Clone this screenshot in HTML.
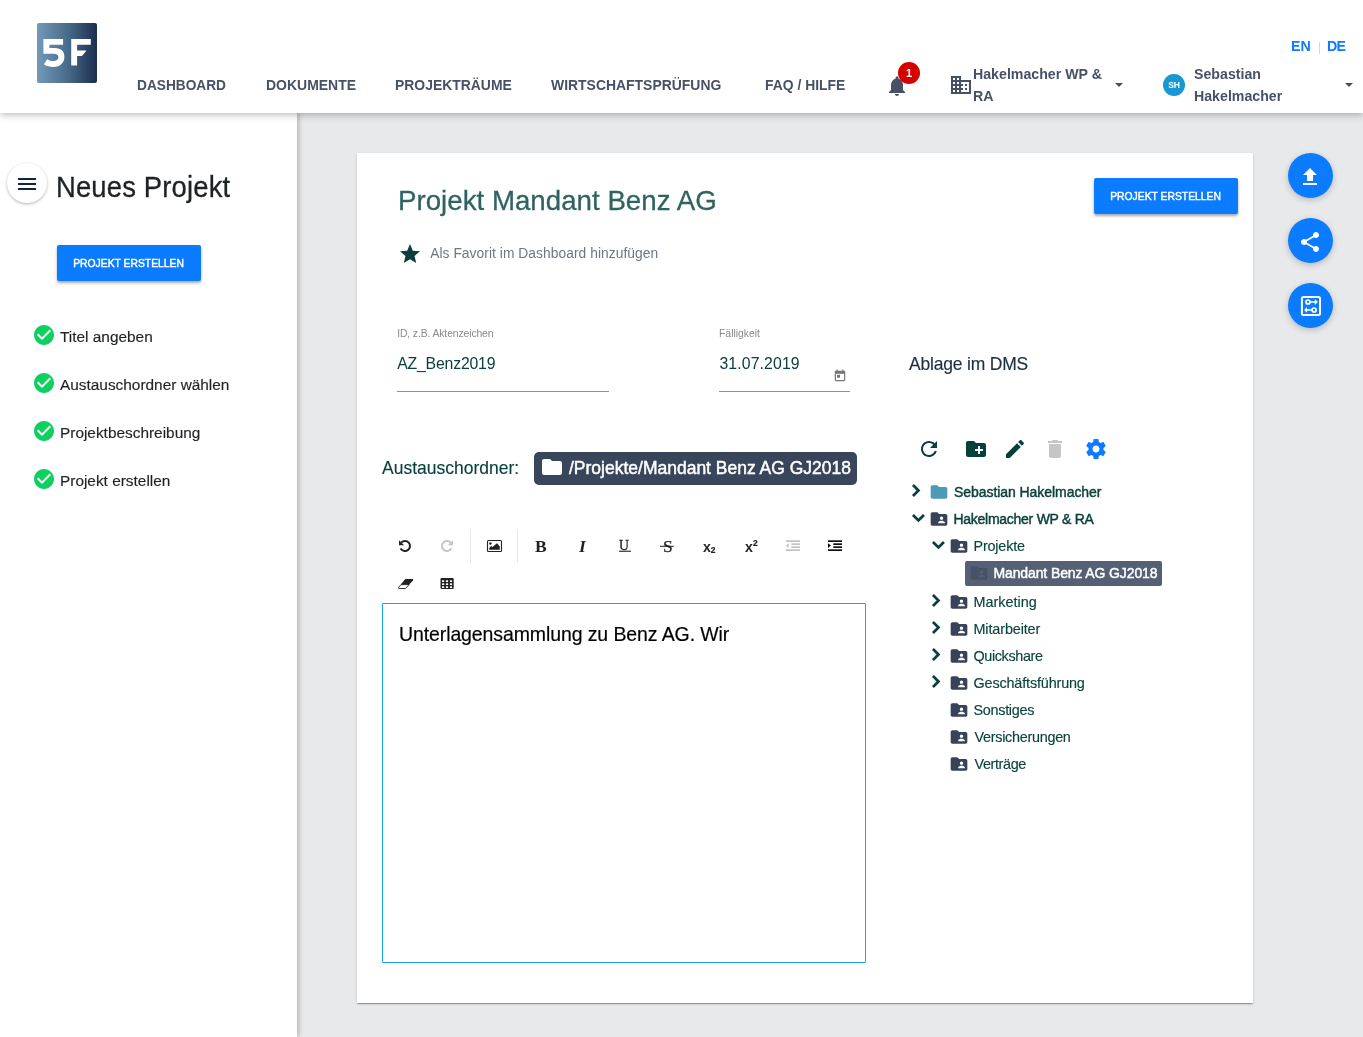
<!DOCTYPE html>
<html lang="de">
<head>
<meta charset="utf-8">
<title>Neues Projekt</title>
<style>
*{box-sizing:border-box;margin:0;padding:0}
html,body{width:1363px;height:1037px;overflow:hidden}
body{font-family:"Liberation Sans",sans-serif;background:#e8e9eb;position:relative;color:#1f2933}
.abs{position:absolute;white-space:nowrap}
svg{position:absolute;display:block;overflow:visible}
/* header */
#hdr{position:absolute;left:0;top:0;width:1363px;height:113px;background:#fff;box-shadow:0 2px 7px rgba(0,0,0,.27);z-index:5}
#logo{position:absolute;left:37px;top:23px;width:60px;height:60px;border-radius:2px;background:linear-gradient(90deg,#739ab8 0%,#4a6c8c 50%,#1b2d4e 100%)}
.nav{position:absolute;top:77px;transform-origin:0 50%;font-weight:bold;font-size:15.4px;line-height:16px;color:#475166;white-space:nowrap}
.org{position:absolute;font-weight:bold;font-size:15.4px;line-height:22.2px;transform-origin:0 50%;transform:scaleX(.921);color:#475166;white-space:nowrap}
.lang{position:absolute;top:38.2px;font-weight:bold;font-size:14.2px;line-height:16px;color:#0d7bff;white-space:nowrap}
/* sidebar */
#side{position:absolute;left:0;top:112px;width:297px;height:925px;background:#fff;box-shadow:2px 0 5px rgba(0,0,0,.22);z-index:3}
.btn{position:absolute;background:#0b7bff;color:#fff;font-size:11.7px;-webkit-text-stroke:.45px #fff;text-align:center;border-radius:2px;box-shadow:0 2px 3px rgba(0,0,0,.35);white-space:nowrap;width:144px;height:36px;line-height:36px}
.step{position:absolute;left:60px;font-size:15.4px;line-height:18px;color:#1e2226;white-space:nowrap;-webkit-text-stroke:.15px #1e2226}
/* card */
#card{position:absolute;left:357px;top:153px;width:896px;height:850px;background:#fff;box-shadow:0 2px 1px -1px rgba(0,0,0,.2),0 1px 1px 0 rgba(0,0,0,.14),0 1px 3px 0 rgba(0,0,0,.12);z-index:1}
.fab{position:absolute;left:1288px;width:45px;height:45px;border-radius:50%;background:#0b7bff;box-shadow:0 2px 6px rgba(0,0,0,.22);z-index:2}
.tree{position:absolute;font-size:14.4px;line-height:18px;color:#0b433f;white-space:nowrap;-webkit-text-stroke:.15px #0b433f}
.tree.b{font-size:14px;color:#0a3f3b;-webkit-text-stroke:.45px #0a3f3b}
.lbl{position:absolute;font-size:10.4px;line-height:12px;color:#8a8a8a;white-space:nowrap}
.val{position:absolute;font-size:15.4px;line-height:18px;color:#0a403e;white-space:nowrap}
.ul{position:absolute;height:1px;background:#8f8f8f}
.btn span{display:inline-block;transform:scaleX(.885);transform-origin:50% 50%}
#hdr,#side,#card{will-change:transform}
</style>
</head>
<body>
<!-- HEADER -->
<div id="hdr">
  <div id="logo">
    <svg width="60" height="60" viewBox="0 0 60 60" style="left:0;top:0"><g fill="#fff">
      <path d="M6.400 16.100H26.100V21.700H12.400V25.100H17.600C24.600 25.100 27.400 28.900 27.400 33.900 27.400 39.300 23.400 43.900 16.400 43.900 12.800 43.900 9.300 42.900 6.900 41.200L10.200 36.200C12 37.400 14.200 38.100 16.300 38.100 19.500 38.100 21.400 36.500 21.400 34.200 21.400 31.900 19.900 30.700 16 30.700H6.400z"/>
      <path d="M34.200 16.100H53.800V21.700H40.100V27.500H49.500L45 33H40.100V42.600H34.200z"/>
    </g></svg>
  </div>
  <div class="nav" id="nDA" style="left:137.0px;transform:scaleX(0.889)">DASHBOARD</div>
  <div class="nav" id="nDO" style="left:265.7px;transform:scaleX(0.9082)">DOKUMENTE</div>
  <div class="nav" id="nPR" style="left:395.2px;transform:scaleX(0.9043)">PROJEKTRÄUME</div>
  <div class="nav" id="nWI" style="left:551.2px;transform:scaleX(0.9053)">WIRTSCHAFTSPRÜFUNG</div>
  <div class="nav" id="nFA" style="left:765.2px;transform:scaleX(0.9024)">FAQ / HILFE</div>
  <!-- bell -->
  <svg width="24" height="24" viewBox="0 0 24 24" style="left:885px;top:73.5px"><path fill="#475166" d="M12 22c1.100 0 2-.9 2-2h-4c0 1.100.89 2 2 2zm6-6v-5c0-3.070-1.640-5.640-4.500-6.320V4c0-.83-.67-1.500-1.500-1.500s-1.500.67-1.500 1.500v.68C7.630 5.360 6 7.920 6 11v5l-2 2v1h16v-1l-2-2z"/></svg>
  <div class="abs" style="left:898px;top:62px;width:22px;height:22px;border-radius:50%;background:#d50000;color:#fff;font-weight:bold;font-size:11px;line-height:22px;text-align:center">1</div>
  <!-- building -->
  <svg width="24" height="24" viewBox="0 0 24 24" style="left:949px;top:73px"><path fill="#475166" d="M12 7V3H2v18h20V7H12zM6 19H4v-2h2v2zm0-4H4v-2h2v2zm0-4H4V9h2v2zm0-4H4V5h2v2zm4 12H8v-2h2v2zm0-4H8v-2h2v2zm0-4H8V9h2v2zm0-4H8V5h2v2zm10 12h-8v-2h2v-2h-2v-2h2v-2h-2V9h8v10zm-2-8h-2v2h2v-2zm0 4h-2v2h2v-2z"/></svg>
  <div class="org" id="o1" style="left:973.1px;top:62.5px">Hakelmacher WP &amp;<br>RA</div>
  <svg width="8" height="4" viewBox="0 0 8 4" style="left:1114.8px;top:83px"><path fill="#475166" d="M0 0h8L4 4z"/></svg>
  <div class="abs" style="left:1163px;top:74px;width:22px;height:22px;border-radius:50%;background:#1797d4;color:#fff;font-weight:bold;font-size:8.6px;line-height:22px;text-align:center;letter-spacing:-.2px">SH</div>
  <div class="org" id="o2" style="left:1194px;top:62.5px">Sebastian<br>Hakelmacher</div>
  <svg width="8" height="4" viewBox="0 0 8 4" style="left:1344.5px;top:83px"><path fill="#475166" d="M0 0h8L4 4z"/></svg>
  <div class="lang" id="lEN" style="left:1291px">EN</div>
  <div class="abs" style="left:1319px;top:41.5px;width:1px;height:12px;background:#d3d6db"></div>
  <div class="lang" id="lDE" style="left:1327px;letter-spacing:-.8px">DE</div>
</div>

<!-- SIDEBAR -->
<div id="side">
  <div class="abs" style="left:7px;top:51px;width:40px;height:40px;border-radius:50%;background:#fff;box-shadow:0 1px 3px rgba(0,0,0,.3)"></div>
  <svg width="24" height="24" viewBox="0 0 24 24" style="left:15px;top:60px"><path fill="#122640" d="M3 18h18v-2H3v2zm0-5h18v-2H3v2zm0-7v2h18V6H3z"/></svg>
  <div class="abs" id="np" style="-webkit-text-stroke:.3px #1f2326;left:56.4px;top:57px;letter-spacing:.17px;transform-origin:0 50%;transform:scaleX(0.949);font-size:28.9px;line-height:36px;color:#1f2326">Neues Projekt</div>
  <div class="btn" id="b1" style="left:57px;top:133px"><span id="b1t">PROJEKT ERSTELLEN</span></div>
  <svg width="24" height="24" viewBox="0 0 24 24" style="left:32px;top:211px"><circle cx="12" cy="12" r="9" fill="#fff"/><path fill="#10cf62" d="M12 2C6.480 2 2 6.480 2 12s4.480 10 10 10 10-4.480 10-10S17.520 2 12 2zm-2 15l-5-5 1.410-1.410L10 14.170l7.590-7.590L19 8l-9 9z"/></svg>
  <svg width="24" height="24" viewBox="0 0 24 24" style="left:32px;top:259px"><circle cx="12" cy="12" r="9" fill="#fff"/><path fill="#10cf62" d="M12 2C6.480 2 2 6.480 2 12s4.480 10 10 10 10-4.480 10-10S17.520 2 12 2zm-2 15l-5-5 1.410-1.410L10 14.170l7.590-7.590L19 8l-9 9z"/></svg>
  <svg width="24" height="24" viewBox="0 0 24 24" style="left:32px;top:307px"><circle cx="12" cy="12" r="9" fill="#fff"/><path fill="#10cf62" d="M12 2C6.480 2 2 6.480 2 12s4.480 10 10 10 10-4.480 10-10S17.520 2 12 2zm-2 15l-5-5 1.410-1.410L10 14.170l7.590-7.590L19 8l-9 9z"/></svg>
  <svg width="24" height="24" viewBox="0 0 24 24" style="left:32px;top:355px"><circle cx="12" cy="12" r="9" fill="#fff"/><path fill="#10cf62" d="M12 2C6.480 2 2 6.480 2 12s4.480 10 10 10 10-4.480 10-10S17.520 2 12 2zm-2 15l-5-5 1.410-1.410L10 14.170l7.590-7.590L19 8l-9 9z"/></svg>
  <div class="step" id="s0" style="top:216.2px">Titel angeben</div>
  <div class="step" id="s1" style="top:264.2px">Austauschordner wählen</div>
  <div class="step" id="s2" style="top:312.2px">Projektbeschreibung</div>
  <div class="step" id="s3" style="top:360.2px">Projekt erstellen</div>
</div>

<!-- CARD -->
<div id="card">
  <div class="abs" id="ttl" style="-webkit-text-stroke:.3px #2f6360;left:41px;top:29.4px;transform-origin:0 50%;transform:scaleX(0.9788);font-size:28.3px;line-height:36px;color:#2f6360">Projekt Mandant Benz AG</div>
  <div class="btn" id="b2" style="left:737px;top:25px"><span id="b2t">PROJEKT ERSTELLEN</span></div>
  <svg width="24" height="24" viewBox="0 0 24 24" style="left:41.3px;top:88.9px"><path fill="#0c3e3d" d="M12 17.270L18.180 21l-1.640-7.030L22 9.240l-7.190-.61L12 2 9.190 8.630 2 9.240l5.460 4.730L5.820 21z"/></svg>
  <div class="abs" id="fav" style="left:73.2px;top:93px;letter-spacing:.05px;font-size:13.800px;line-height:16px;color:#6d7687">Als Favorit im Dashboard hinzufügen</div>

  <div class="lbl" id="l1" style="left:40.2px;letter-spacing:-.12px;top:174.5px">ID, z.B. Aktenzeichen</div>
  <div class="val" id="v1" style="left:40.2px;letter-spacing:-.18px;top:202.2px;font-size:15.8px">AZ_Benz2019</div>
  <div class="ul" style="left:40px;top:238px;width:212px"></div>
  <div class="lbl" id="l2" style="left:362px;top:174.5px">Fälligkeit</div>
  <div class="val" id="v2" style="left:362.4px;letter-spacing:.13px;top:202.2px;font-size:15.8px">31.07.2019</div>
  <div class="ul" style="left:362px;top:238px;width:131px"></div>
  <svg width="14" height="14" viewBox="0 0 24 24" style="left:476px;top:215.800px"><path fill="#757575" d="M19 3h-1V1h-2v2H8V1H6v2H5c-1.110 0-1.990.9-1.990 2L3 19c0 1.100.89 2 2 2h14c1.100 0 2-.9 2-2V5c0-1.100-.9-2-2-2zm0 16H5V8h14v11zM7 10h5v5H7z"/></svg>
  <div class="abs" id="abl" style="-webkit-text-stroke:.15px #1b2f45;left:552px;top:200px;letter-spacing:-.2px;transform-origin:0 50%;transform:scaleX(0.9409);font-size:18.6px;line-height:22px;color:#1b2f45">Ablage im DMS</div>

  <div class="abs" id="aus" style="-webkit-text-stroke:.15px #08423f;left:25px;top:304px;transform-origin:0 50%;transform:scaleX(0.9409);font-size:18.6px;line-height:22px;color:#08423f">Austauschordner:</div>
  <div class="abs" style="left:177px;top:299px;width:323px;height:33px;border-radius:5px;background:#38455a"></div>
  <svg width="24" height="24" viewBox="0 0 24 24" style="left:182.5px;top:302.2px"><path fill="#fff" d="M10 4H4c-1.100 0-1.990.9-1.990 2L2 18c0 1.100.9 2 2 2h16c1.100 0 2-.9 2-2V8c0-1.100-.9-2-2-2h-8l-2-2z"/></svg>
  <div class="abs" id="chip" style="left:211.500px;top:304px;transform-origin:0 50%;transform:scaleX(0.9409);font-size:18.6px;line-height:22px;color:#fff;-webkit-text-stroke:.5px #fff">/Projekte/Mandant Benz AG GJ2018</div>

  <!-- tree toolbar -->
  <svg width="24" height="24" viewBox="0 0 24 24" style="left:560px;top:284px"><path fill="#06403d" d="M17.650 6.350C16.200 4.900 14.210 4 12 4c-4.420 0-7.990 3.580-7.990 8s3.570 8 7.990 8c3.730 0 6.840-2.550 7.730-6h-2.080c-.82 2.330-3.040 4-5.650 4-3.310 0-6-2.690-6-6s2.690-6 6-6c1.660 0 3.140.69 4.220 1.780L13 11h7V4l-2.350 2.350z"/></svg>
  <svg width="24" height="24" viewBox="0 0 24 24" style="left:606.5px;top:284px"><path fill="#06403d" d="M20 6h-8l-2-2H4c-1.110 0-1.990.89-1.990 2L2 18c0 1.110.89 2 2 2h16c1.110 0 2-.89 2-2V8c0-1.110-.89-2-2-2zm-1 8h-3v3h-2v-3h-3v-2h3V9h2v3h3v2z"/></svg>
  <svg width="24" height="24" viewBox="0 0 24 24" style="left:646px;top:284px"><path fill="#06403d" d="M3 17.250V21h3.750L17.810 9.940l-3.750-3.750L3 17.250zM20.710 7.040c.39-.39.39-1.020 0-1.410l-2.340-2.340c-.39-.39-1.020-.39-1.410 0l-1.830 1.830 3.750 3.750 1.830-1.830z"/></svg>
  <svg width="24" height="24" viewBox="0 0 24 24" style="left:686px;top:284px"><path fill="#c6c6c6" d="M6 19c0 1.100.9 2 2 2h8c1.100 0 2-.9 2-2V7H6v12zM19 4h-3.500l-1-1h-5l-1 1H5v2h14V4z"/></svg>
  <svg width="24" height="24" viewBox="0 0 24 24" style="left:726.5px;top:284px"><path fill="#0d7bff" d="M19.430 12.980c.04-.32.07-.64.07-.98s-.03-.66-.07-.98l2.110-1.650c.19-.15.24-.42.12-.64l-2-3.460c-.12-.22-.39-.3-.61-.22l-2.490 1c-.52-.4-1.080-.73-1.690-.98l-.38-2.650C14.460 2.180 14.250 2 14 2h-4c-.25 0-.46.18-.49.42l-.38 2.650c-.61.25-1.170.59-1.690.98l-2.490-1c-.23-.09-.49 0-.61.22l-2 3.460c-.13.22-.07.49.12.64l2.110 1.650c-.04.32-.07.65-.07.98s.03.66.07.98l-2.110 1.650c-.19.15-.24.42-.12.64l2 3.460c.12.22.39.3.61.22l2.490-1c.52.4 1.080.73 1.690.98l.38 2.650c.03.24.24.42.49.42h4c.25 0 .46-.18.49-.42l.38-2.650c.61-.25 1.170-.59 1.690-.98l2.490 1c.23.09.49 0 .61-.22l2-3.460c.12-.22.07-.49-.12-.64l-2.110-1.650zM12 15.500c-1.930 0-3.500-1.570-3.500-3.500s1.570-3.500 3.500-3.500 3.500 1.570 3.500 3.500-1.570 3.500-3.500 3.500z"/></svg>
  <!-- tree -->
  <svg width="8.4" height="13" viewBox="0 0 8.4 13" style="left:555px;top:330.9px"><path fill="none" stroke="#063f3c" stroke-width="2.7" d="M.95 .95L6.5 6.5.95 12.05"/></svg>
  <svg width="20" height="20" viewBox="0 0 24 24" style="left:572.1px;top:329.4px"><path fill="#4b9bb6" d="M10 4H4c-1.100 0-1.990.9-1.990 2L2 18c0 1.100.9 2 2 2h16c1.100 0 2-.9 2-2V8c0-1.100-.9-2-2-2h-8l-2-2z"/></svg>
  <div class="tree b" id="t1" style="left:597px;top:330px;letter-spacing:-.06px">Sebastian Hakelmacher</div>
  <svg width="12.9" height="8.4" viewBox="0 0 12.9 8.4" style="left:555px;top:360.7px"><path fill="none" stroke="#063f3c" stroke-width="2.7" d="M.95 .95L6.45 6.45 11.95 .95"/></svg>
  <svg width="20" height="20" viewBox="0 0 24 24" style="left:572.1px;top:356.2px"><path fill="#384259" d="M20 6h-8l-2-2H4c-1.100 0-1.990.9-1.990 2L2 18c0 1.100.9 2 2 2h16c1.100 0 2-.9 2-2V8c0-1.100-.9-2-2-2zm-5 3c1.100 0 2 .9 2 2s-.9 2-2 2-2-.9-2-2 .9-2 2-2zm4 8h-8v-1c0-1.330 2.670-2 4-2s4 .670 4 2v1z"/></svg>
  <div class="tree b" id="t2" style="left:596.5px;top:357px;letter-spacing:-.27px">Hakelmacher WP &amp; RA</div>
  <svg width="12.9" height="8.4" viewBox="0 0 12.9 8.4" style="left:575.2px;top:388.2px"><path fill="none" stroke="#063f3c" stroke-width="2.7" d="M.95 .95L6.45 6.45 11.95 .95"/></svg>
  <svg width="20" height="20" viewBox="0 0 24 24" style="left:592.1px;top:383.1px"><path fill="#384259" d="M20 6h-8l-2-2H4c-1.100 0-1.990.9-1.990 2L2 18c0 1.100.9 2 2 2h16c1.100 0 2-.9 2-2V8c0-1.100-.9-2-2-2zm-5 3c1.100 0 2 .9 2 2s-.9 2-2 2-2-.9-2-2 .9-2 2-2zm4 8h-8v-1c0-1.330 2.670-2 4-2s4 .670 4 2v1z"/></svg>
  <div class="tree" id="t3" style="left:616.5px;top:384px;letter-spacing:-.19px">Projekte</div>
  <div class="abs" style="left:608px;top:408.3px;width:197px;height:24.5px;border-radius:2px;background:#556074"></div>
  <svg width="20" height="20" viewBox="0 0 24 24" style="left:612.2px;top:410px"><path fill="#475168" d="M20 6h-8l-2-2H4c-1.100 0-1.990.9-1.990 2L2 18c0 1.100.9 2 2 2h16c1.100 0 2-.9 2-2V8c0-1.100-.9-2-2-2zm-5 3c1.100 0 2 .9 2 2s-.9 2-2 2-2-.9-2-2 .9-2 2-2zm4 8h-8v-1c0-1.330 2.670-2 4-2s4 .670 4 2v1z"/></svg>
  <div class="tree b" id="t4" style="left:636.5px;top:411px;letter-spacing:-.12px;color:#fff;-webkit-text-stroke:.45px #fff">Mandant Benz AG GJ2018</div>
  <svg width="8.4" height="13" viewBox="0 0 8.4 13" style="left:575px;top:441.0px"><path fill="none" stroke="#063f3c" stroke-width="2.7" d="M.95 .95L6.5 6.5.95 12.05"/></svg>
  <svg width="20" height="20" viewBox="0 0 24 24" style="left:592.1px;top:439.1px"><path fill="#384259" d="M20 6h-8l-2-2H4c-1.100 0-1.990.9-1.990 2L2 18c0 1.100.9 2 2 2h16c1.100 0 2-.9 2-2V8c0-1.100-.9-2-2-2zm-5 3c1.100 0 2 .9 2 2s-.9 2-2 2-2-.9-2-2 .9-2 2-2zm4 8h-8v-1c0-1.330 2.670-2 4-2s4 .670 4 2v1z"/></svg>
  <div class="tree" id="r0" style="left:616.5px;top:440px">Marketing</div>
  <svg width="8.4" height="13" viewBox="0 0 8.4 13" style="left:575px;top:468.0px"><path fill="none" stroke="#063f3c" stroke-width="2.7" d="M.95 .95L6.5 6.5.95 12.05"/></svg>
  <svg width="20" height="20" viewBox="0 0 24 24" style="left:592.1px;top:466.1px"><path fill="#384259" d="M20 6h-8l-2-2H4c-1.100 0-1.990.9-1.990 2L2 18c0 1.100.9 2 2 2h16c1.100 0 2-.9 2-2V8c0-1.100-.9-2-2-2zm-5 3c1.100 0 2 .9 2 2s-.9 2-2 2-2-.9-2-2 .9-2 2-2zm4 8h-8v-1c0-1.330 2.670-2 4-2s4 .670 4 2v1z"/></svg>
  <div class="tree" id="r1" style="left:616.5px;top:467px;letter-spacing:-0.12px">Mitarbeiter</div>
  <svg width="8.4" height="13" viewBox="0 0 8.4 13" style="left:575px;top:495.0px"><path fill="none" stroke="#063f3c" stroke-width="2.7" d="M.95 .95L6.5 6.5.95 12.05"/></svg>
  <svg width="20" height="20" viewBox="0 0 24 24" style="left:592.1px;top:493.1px"><path fill="#384259" d="M20 6h-8l-2-2H4c-1.100 0-1.990.9-1.990 2L2 18c0 1.100.9 2 2 2h16c1.100 0 2-.9 2-2V8c0-1.100-.9-2-2-2zm-5 3c1.100 0 2 .9 2 2s-.9 2-2 2-2-.9-2-2 .9-2 2-2zm4 8h-8v-1c0-1.330 2.670-2 4-2s4 .670 4 2v1z"/></svg>
  <div class="tree" id="r2" style="left:616.5px;top:494px;letter-spacing:-0.37px">Quickshare</div>
  <svg width="8.4" height="13" viewBox="0 0 8.4 13" style="left:575px;top:522.0px"><path fill="none" stroke="#063f3c" stroke-width="2.7" d="M.95 .95L6.5 6.5.95 12.05"/></svg>
  <svg width="20" height="20" viewBox="0 0 24 24" style="left:592.1px;top:520.1px"><path fill="#384259" d="M20 6h-8l-2-2H4c-1.100 0-1.990.9-1.990 2L2 18c0 1.100.9 2 2 2h16c1.100 0 2-.9 2-2V8c0-1.100-.9-2-2-2zm-5 3c1.100 0 2 .9 2 2s-.9 2-2 2-2-.9-2-2 .9-2 2-2zm4 8h-8v-1c0-1.330 2.670-2 4-2s4 .670 4 2v1z"/></svg>
  <div class="tree" id="r3" style="left:616.5px;top:521px;letter-spacing:-0.15px">Geschäftsführung</div>
  <svg width="20" height="20" viewBox="0 0 24 24" style="left:592.1px;top:547.1px"><path fill="#384259" d="M20 6h-8l-2-2H4c-1.100 0-1.990.9-1.990 2L2 18c0 1.100.9 2 2 2h16c1.100 0 2-.9 2-2V8c0-1.100-.9-2-2-2zm-5 3c1.100 0 2 .9 2 2s-.9 2-2 2-2-.9-2-2 .9-2 2-2zm4 8h-8v-1c0-1.330 2.670-2 4-2s4 .670 4 2v1z"/></svg>
  <div class="tree" id="r4" style="left:616.5px;top:548px;letter-spacing:-0.29px">Sonstiges</div>
  <svg width="20" height="20" viewBox="0 0 24 24" style="left:592.1px;top:574.1px"><path fill="#384259" d="M20 6h-8l-2-2H4c-1.100 0-1.990.9-1.990 2L2 18c0 1.100.9 2 2 2h16c1.100 0 2-.9 2-2V8c0-1.100-.9-2-2-2zm-5 3c1.100 0 2 .9 2 2s-.9 2-2 2-2-.9-2-2 .9-2 2-2zm4 8h-8v-1c0-1.330 2.670-2 4-2s4 .670 4 2v1z"/></svg>
  <div class="tree" id="r5" style="left:617.5px;top:575px;letter-spacing:-0.28px">Versicherungen</div>
  <svg width="20" height="20" viewBox="0 0 24 24" style="left:592.1px;top:601.1px"><path fill="#384259" d="M20 6h-8l-2-2H4c-1.100 0-1.990.9-1.990 2L2 18c0 1.100.9 2 2 2h16c1.100 0 2-.9 2-2V8c0-1.100-.9-2-2-2zm-5 3c1.100 0 2 .9 2 2s-.9 2-2 2-2-.9-2-2 .9-2 2-2zm4 8h-8v-1c0-1.330 2.670-2 4-2s4 .670 4 2v1z"/></svg>
  <div class="tree" id="r6" style="left:617.5px;top:602px;letter-spacing:-0.37px">Verträge</div>

  <!-- editor toolbar -->
  <svg width="470" height="75" viewBox="0 0 470 75" style="left:33px;top:372px"><path d="M11.28 17.65A5 5 0 1 1 10.59 23.35" fill="none" stroke="#222" stroke-width="2"/><path d="M9 15.2L9 20.3L14.1 20.3z" fill="#222"/><path d="M60.72 17.65A5 5 0 1 0 61.41 23.35" fill="none" stroke="#c4c4c4" stroke-width="2"/><path d="M63 15.2L63 20.3L57.9 20.3z" fill="#c4c4c4"/><rect x="80" y="4" width="1" height="34" fill="#e8e8e8"/><rect x="127" y="4" width="1" height="34" fill="#e8e8e8"/><rect x="97.5" y="15.5" width="14" height="11" rx="1" fill="none" stroke="#222" stroke-width="1.1"/><circle cx="100.39999999999998" cy="18.5" r="1.25" fill="#222"/><path fill="#222" d="M99.2 24.7L99.2 22.9L101.2 21L102.4 22.1L107 18.2L109.8 21.4L109.8 24.7z"/><rect x="396" y="15.299999999999955" width="14" height="1.7" fill="#c2c2c2"/><rect x="401.3" y="18.299999999999955" width="8.7" height="1.7" fill="#c2c2c2"/><rect x="401.3" y="21.299999999999955" width="8.7" height="1.7" fill="#c2c2c2"/><rect x="396" y="24.299999999999955" width="14" height="1.7" fill="#c2c2c2"/><path fill="#c2c2c2" d="M398.6 18.2L396 20.55L398.6 22.9z"/><rect x="438" y="15.299999999999955" width="14" height="1.7" fill="#111"/><rect x="443.3" y="18.299999999999955" width="8.7" height="1.7" fill="#111"/><rect x="443.3" y="21.299999999999955" width="8.7" height="1.7" fill="#111"/><rect x="438" y="24.299999999999955" width="14" height="1.7" fill="#111"/><path fill="#000" d="M438 18.2L440.9 20.55L438 22.9z"/><path fill="#222" d="M15.3 54.1L23 54.1L23 55.4L19.2 59.6L10.7 59.6z"/><path fill="none" stroke="#222" stroke-width=".9" d="M11 59.6L19.2 59.6L15.5 63.5L8.7 63.5L8.7 62.3z"/><rect x="50.5" y="53" width="13.2" height="10.9" rx="1" fill="#222"/><rect x="52" y="55.2" width="2.2" height="1.7" rx=".5" fill="#fff"/><rect x="52" y="58.2" width="2.2" height="1.7" rx=".5" fill="#fff"/><rect x="52" y="61.2" width="2.2" height="1.7" rx=".5" fill="#fff"/><rect x="55.9" y="55.2" width="2.2" height="1.7" rx=".5" fill="#fff"/><rect x="55.9" y="58.2" width="2.2" height="1.7" rx=".5" fill="#fff"/><rect x="55.9" y="61.2" width="2.2" height="1.7" rx=".5" fill="#fff"/><rect x="59.9" y="55.2" width="2.2" height="1.7" rx=".5" fill="#fff"/><rect x="59.9" y="58.2" width="2.2" height="1.7" rx=".5" fill="#fff"/><rect x="59.9" y="61.2" width="2.2" height="1.7" rx=".5" fill="#fff"/><rect x="270" y="20.799999999999955" width="13.8" height="1" fill="#222"/><rect x="229" y="25.700000000000045" width="12" height="1.1" fill="#222"/></svg>
  <div class="abs" id="gB" style="left:178px;top:383px;font-family:'Liberation Serif',serif;color:#222;font-weight:bold;font-size:17.5px;line-height:20px">B</div>
  <div class="abs" id="gI" style="left:222px;top:383px;font-family:'Liberation Serif',serif;color:#222;font-weight:bold;font-style:italic;font-size:17.5px;line-height:20px">I</div>
  <div class="abs" id="gU" style="left:262px;top:383px;font-family:'Liberation Serif',serif;color:#222;font-size:13.8px;line-height:20px;-webkit-text-stroke:.3px #222">U</div>
  <div class="abs" id="gS" style="left:306px;top:383px;font-family:'Liberation Serif',serif;color:#222;font-size:17.5px;line-height:20px;-webkit-text-stroke:.25px #222">S</div>
  <div class="abs" id="gx1" style="left:346px;top:385px;color:#222;font-weight:bold;font-size:14.2px;line-height:18px">x</div>
  <div class="abs" id="g21" style="left:353.8px;top:392px;color:#222;font-weight:bold;font-size:8.4px;line-height:10px;-webkit-text-stroke:.2px #222">2</div>
  <div class="abs" id="gx2" style="left:388px;top:385px;color:#222;font-weight:bold;font-size:14.2px;line-height:18px">x</div>
  <div class="abs" id="g22" style="left:396px;top:385px;color:#222;font-weight:bold;font-size:8.4px;line-height:10px;-webkit-text-stroke:.2px #222">2</div>

  <!-- editor -->
  <div class="abs" style="left:25px;top:450px;width:484px;height:360px;border:1px solid #16a6ee;border-radius:1px;background:#fff"></div>
  <div class="abs" id="edt" style="-webkit-text-stroke:.2px #000;left:41.7px;top:469px;letter-spacing:-.11px;transform-origin:0 50%;transform:scaleX(0.9466);font-size:20.6px;line-height:24px;color:#000">Unterlagensammlung zu Benz AG. Wir</div>
</div>

<!-- FABs -->
<div class="fab" style="top:153px"></div>
<div class="fab" style="top:218px"></div>
<div class="fab" style="top:283px"></div>
<svg width="24" height="24" viewBox="0 0 24 24" style="left:1298.3px;top:164.600px;z-index:3"><path fill="#fff" d="M9 16h6v-6h4l-7-7-7 7h4zm-4 2h14v2H5z"/></svg>
<svg width="24" height="24" viewBox="0 0 24 24" style="left:1298.3px;top:230px;z-index:3"><path fill="#fff" d="M18 16.080c-.76 0-1.440.3-1.960.77L8.910 12.700c.05-.23.09-.46.09-.7s-.04-.47-.09-.7l7.050-4.110c.54.5 1.250.81 2.040.81 1.660 0 3-1.340 3-3s-1.340-3-3-3-3 1.340-3 3c0 .24.04.47.09.7L8.040 9.810C7.500 9.310 6.790 9 6 9c-1.660 0-3 1.340-3 3s1.340 3 3 3c.79 0 1.500-.31 2.040-.81l7.120 4.160c-.05.21-.08.43-.08.65 0 1.610 1.310 2.920 2.920 2.920 1.610 0 2.920-1.310 2.920-2.920s-1.310-2.920-2.920-2.920z"/></svg>
<svg width="24" height="24" viewBox="0 0 24 24" style="left:1299px;top:294px;z-index:3"><g fill="none" stroke="#fff"><rect x="2.900" y="2.900" width="18.100" height="18.100" rx="1.500" stroke-width="2"/><circle cx="9" cy="8" r="2" stroke-width="1.700"/><circle cx="15.100" cy="16" r="2" stroke-width="1.700"/><path d="M11.300 8h5M12.800 16h-5" stroke-width="1.600"/></g><path fill="#fff" d="M15.800 5.100L19 8 15.800 10.900zM8 13.100L5.100 16 8 18.800z"/></svg>
</body>
</html>
